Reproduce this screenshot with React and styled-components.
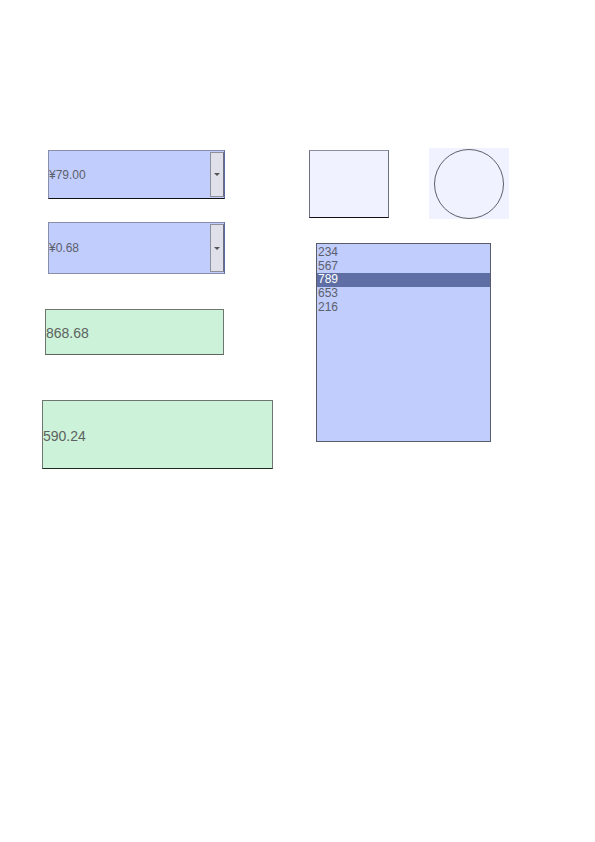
import React from "react";
import styled, { createGlobalStyle } from "styled-components";

const Global = createGlobalStyle`
  html, body { margin: 0; padding: 0; background: #fff; }
  body { font-family: "Liberation Sans", Arial, sans-serif; }
`;

const Page = styled.div`
  width: 595px;
  height: 842px;
  display: flex;
  align-items: flex-start;
  box-sizing: border-box;
`;

const LeftCol = styled.div`
  width: 230px;
  margin-left: 42px;
  margin-top: 150px;
  display: flex;
  flex-direction: column;
  align-items: flex-start;
`;

const RightCol = styled.div`
  margin-left: 37px;
  margin-top: 148px;
  display: flex;
  flex-direction: column;
  align-items: flex-start;
`;

const Combo = styled.div`
  box-sizing: border-box;
  width: 177px;
  height: ${(p) => p.$h}px;
  margin-left: 6px;
  margin-top: ${(p) => p.$mt || 0}px;
  background: #c1cdfd;
  border-top: 1px solid #8a8fa8;
  border-left: 1px solid #8a8fa8;
  border-bottom: 1px solid ${(p) => (p.$dark ? "#111" : "#8a8fa8")};
  border-right: 1px solid #5c6aa0;
  display: flex;
  align-items: stretch;
`;

const ComboText = styled.div`
  flex: 1;
  display: flex;
  align-items: center;
  font-size: 12px;
  color: #5c5f6c;
`;

const ComboButton = styled.div`
  box-sizing: border-box;
  width: 14px;
  margin: 1px 0;
  background: #dfe0ea;
  border: 1px solid #8d8f9c;
  border-right-color: #6b6e7c;
  display: flex;
  align-items: center;
  justify-content: center;
`;

const Arrow = styled.div`
  width: 0;
  height: 0;
  border-left: 3px solid transparent;
  border-right: 3px solid transparent;
  border-top: 3px solid #555;
`;

const TextField = styled.div`
  box-sizing: border-box;
  width: ${(p) => p.$w}px;
  height: ${(p) => p.$h}px;
  margin-left: ${(p) => p.$ml || 0}px;
  margin-top: ${(p) => p.$mt || 0}px;
  background: #ccf2d9;
  border: 1px solid #6f7670;
  border-bottom-color: ${(p) => (p.$dark ? "#1c2a1f" : "#5c635e")};
  display: flex;
  align-items: center;
  padding-top: 2px;
  font-size: 14px;
  color: #5d6260;
`;

const ShapeRow = styled.div`
  display: flex;
  align-items: flex-start;
`;

const CheckSquare = styled.div`
  box-sizing: border-box;
  width: 80px;
  height: 68px;
  margin-top: 2px;
  background: #f0f3ff;
  border-top: 1px solid #8b8e9c;
  border-left: 1px solid #6e7182;
  border-right: 1px solid #6e7182;
  border-bottom: 1px solid #111;
`;

const RadioBox = styled.div`
  width: 80px;
  height: 71px;
  margin-left: 40px;
  background: #f0f3ff;
  display: flex;
  align-items: center;
  justify-content: center;
`;

const RadioCircle = styled.div`
  box-sizing: border-box;
  width: 70px;
  height: 70px;
  border-radius: 50%;
  border: 1px solid #5d5f68;
`;

const ListBox = styled.div`
  box-sizing: border-box;
  width: 175px;
  height: 199px;
  margin-left: 7px;
  margin-top: 24px;
  background: #c1cdfd;
  border: 1px solid #5a5c68;
  padding-top: 2px;
  display: flex;
  flex-direction: column;
`;

const ListItem = styled.div`
  height: 13.7px;
  line-height: 13.7px;
  font-size: 12px;
  padding-left: 1px;
  color: ${(p) => (p.$selected ? "#ffffff" : "#5c5f6c")};
  background: ${(p) => (p.$selected ? "#5f6fa6" : "transparent")};
`;

const items = ["234", "567", "789", "653", "216"];

export default function App() {
  return (
    <>
      <Global />
      <Page>
        <LeftCol>
          <Combo $h={49} $dark>
            <ComboText>¥79.00</ComboText>
            <ComboButton>
              <Arrow />
            </ComboButton>
          </Combo>
          <Combo $h={52} $mt={23}>
            <ComboText>¥0.68</ComboText>
            <ComboButton>
              <Arrow />
            </ComboButton>
          </Combo>
          <TextField $w={179} $h={46} $ml={3} $mt={35}>
            868.68
          </TextField>
          <TextField $w={231} $h={69} $mt={45} $dark>
            590.24
          </TextField>
        </LeftCol>
        <RightCol>
          <ShapeRow>
            <CheckSquare />
            <RadioBox>
              <RadioCircle />
            </RadioBox>
          </ShapeRow>
          <ListBox>
            {items.map((it, i) => (
              <ListItem key={it} $selected={i === 2}>
                {it}
              </ListItem>
            ))}
          </ListBox>
        </RightCol>
      </Page>
    </>
  );
}
